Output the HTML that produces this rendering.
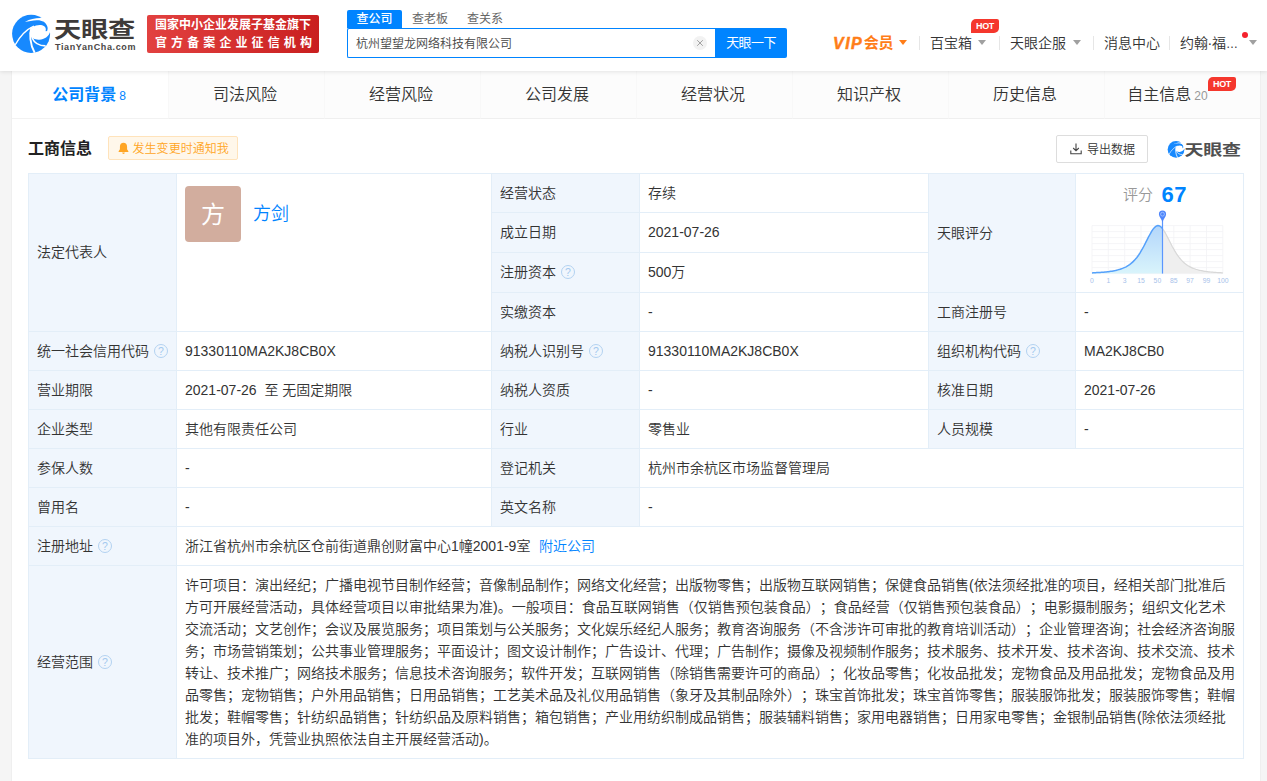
<!DOCTYPE html>
<html lang="zh-CN">
<head>
<meta charset="utf-8">
<title>杭州望望龙网络科技有限公司 - 天眼查</title>
<style>
*{box-sizing:border-box;margin:0;padding:0}
html,body{width:1267px;height:781px;overflow:hidden}
body{background:#f5f5f5;font-family:"Liberation Sans","Noto Sans CJK SC",sans-serif;font-size:14px;color:#333;position:relative}
a{text-decoration:none;color:#0084ff}
.abs{position:absolute}
/* header */
#hd{position:absolute;left:0;top:0;width:1267px;height:71px;background:#fff;box-shadow:0 1px 4px rgba(0,0,0,.10);z-index:5}
#logo-t{position:absolute;left:54px;top:11px;font-size:27.3px;font-weight:700;color:#3e3a39;line-height:38px;letter-spacing:-0.3px;white-space:nowrap;transform:scaleY(0.81);transform-origin:0 50%}
#logo-s{position:absolute;left:55px;top:42px;font-size:9px;font-weight:700;color:#4a4645;line-height:11px;letter-spacing:0.62px;white-space:nowrap}
#banner{position:absolute;left:147px;top:15px;width:172px;height:38px;border-radius:2px;background:linear-gradient(90deg,#e24140,#c91f1f);color:#fff;font-weight:700;white-space:nowrap;overflow:hidden}
#banner .l1{position:absolute;left:8px;top:2px;font-size:12px;line-height:17px;letter-spacing:0}
#banner .l2{position:absolute;left:8px;top:19.5px;font-size:12px;line-height:17px;letter-spacing:4.1px}
.stab{position:absolute;top:10px;height:18px;line-height:18px;font-size:12px;color:#666;white-space:nowrap}
#st1{left:347px;width:55px;background:#0084ff;color:#fff;text-align:center;border-radius:2px 2px 0 0;font-weight:500}
#sbox{position:absolute;left:347px;top:28px;width:369px;height:30px;border:1px solid #0084ff;border-right:0;border-radius:2px 0 0 2px;background:#fff}
#sbox span{position:absolute;left:8px;top:2px;line-height:27px;font-size:12px;color:#444;font-weight:350;white-space:nowrap}
#sclear{position:absolute;left:693px;top:36px}
#sbtn{position:absolute;left:715px;top:28px;width:72px;height:30px;background:#0084ff;color:#fff;font-size:13px;font-weight:400;line-height:29px;text-align:center;border-radius:0 2px 2px 0;letter-spacing:-0.6px}
.nav{position:absolute;top:33px;line-height:20px;font-size:14px;color:#333;white-space:nowrap;font-weight:350}
.sep{position:absolute;top:36px;width:1px;height:14px;background:#e6e6e6}
.arr{position:absolute;top:40px;width:0;height:0;border-left:4.5px solid transparent;border-right:4.5px solid transparent;border-top:5.5px solid #a0a0a0}
.hot{position:absolute;width:28px;height:14px;background:#f5372d;color:#fff;font-size:9px;font-weight:700;line-height:14px;text-align:center;border-radius:5px 2px 5px 0;letter-spacing:-0.3px}
/* main */
#main{position:absolute;left:12px;top:71px;width:1248px;height:710px;background:#fff;box-shadow:0 0 0 1px #efefef}
.tab{position:absolute;top:0;width:156px;height:48px;background:#fcfcfc;border-bottom:1px solid #efefef;border-left:1px solid #f8f8f8;text-align:center;line-height:47px;font-size:16px;color:#333;font-weight:350;padding-right:3px;white-space:nowrap}
.tab.on{background:#fff;border-bottom:1px solid #f2f2f2;padding-right:2px;color:#0084ff;font-weight:700;border-left:0}
.tab small{font-size:12px;font-weight:400;color:#999;margin-left:3px}
.tab.on small{color:#0084ff}
#ttl{position:absolute;left:16px;top:67px;font-size:16px;font-weight:700;color:#222;line-height:22px;white-space:nowrap}
#notice{position:absolute;left:96px;top:65px;width:130px;height:24px;border:1px solid #ffe3bb;background:#fff7ea;border-radius:2px;color:#ffa524;font-size:12px;line-height:22px;white-space:nowrap}
#notice span{position:absolute;left:23.5px;top:0.5px;letter-spacing:0.05px;font-weight:350}
#export{position:absolute;left:1044px;top:64px;width:92px;height:28px;border:1px solid #ddd;border-radius:2px;font-size:12px;color:#333;line-height:26px;white-space:nowrap;background:#fff}
#export span{position:absolute;left:30px;top:0.5px;letter-spacing:0;font-weight:350}
#wm-t{position:absolute;left:1172.5px;top:66.8px;font-size:19px;font-weight:700;color:#505050;line-height:24px;white-space:nowrap;letter-spacing:-0.3px;transform:scaleY(0.77);transform-origin:0 50%}
/* table */
#tb{position:absolute;left:16px;top:102px;width:1216px;height:586px;border:1px solid #e3eef8;background:#fff}
.c{position:absolute;border-right:1px solid #e3eef8;border-bottom:1px solid #e3eef8;font-size:14px;color:#333;white-space:nowrap;padding-left:8px;padding-bottom:1px;line-height:20px;display:flex;align-items:center;font-weight:350}
.c.k{background:#f0f6fd}
.q{display:inline-block;width:14px;height:14px;border:1px solid #b3d2f1;border-radius:50%;margin-left:5px;color:#a3c9ef;font-size:10.5px;line-height:13.5px;text-align:center;font-weight:400;font-family:"Liberation Sans",sans-serif}
#ava{position:absolute;left:8px;top:12px;width:56px;height:56px;border-radius:4px;background:#d2ad9e;color:#fff;font-size:24px;line-height:57px;text-align:center;font-weight:400}
#rep{position:absolute;left:76px;top:26px;font-size:18px;line-height:28px;font-weight:350;color:#0084ff}
#scope{position:absolute;left:156px;top:400px;text-spacing-trim:space-all;font-size:14px;line-height:22px;color:#333;font-weight:350;white-space:nowrap}
#scope div{height:22px}
</style>
</head>
<body>
<div id="hd">
  <svg class="abs" style="left:6px;top:8px" width="50" height="50" viewBox="0 0 781 781">
    <circle cx="392" cy="404" r="297" fill="#1789fe"/>
    <path d="M415 295C470 265 550 250 598 285C622 305 628 335 618 358Q632 370 646 350C662 305 640 255 592 216C555 194 520 188 480 190C420 194 350 203 296 218C380 170 470 154 560 158L720 140L720 378L688 374C670 440 600 492 520 496C480 498 450 490 428 478L400 470C372 420 380 340 415 295Z" fill="#fff"/>
    <path d="M428 286C330 330 220 440 150 566" fill="none" stroke="#fff" stroke-width="23" stroke-linecap="round"/>
    <path d="M398 300C362 400 372 560 448 700" fill="none" stroke="#fff" stroke-width="29"/>
    <path d="M408 468C440 540 520 590 618 592" fill="none" stroke="#fff" stroke-width="25"/>
  </svg>
  <div id="logo-t">天眼查</div>
  <div id="logo-s">TianYanCha.com</div>
  <div id="banner"><div class="l1">国家中小企业发展子基金旗下</div><div class="l2">官方备案企业征信机构</div></div>

  <div class="stab" id="st1">查公司</div>
  <div class="stab" style="left:412px">查老板</div>
  <div class="stab" style="left:467px">查关系</div>
  <div id="sbox"><span>杭州望望龙网络科技有限公司</span></div>
  <svg id="sclear" width="14" height="14" viewBox="0 0 14 14"><circle cx="7" cy="7" r="7" fill="#f2f2f2"/><path d="M4.2 4.2l5.600 5.600M9.800 4.2l-5.600 5.600" stroke="#999" stroke-width="0.9" fill="none"/></svg>
  <div id="sbtn">天眼一下</div>

  <div class="nav" style="left:833px;top:33px;color:#ff7d18;font-weight:700;font-size:15px;letter-spacing:-0.3px"><i style="font-size:16px;letter-spacing:1.5px;margin-right:0.5px;position:relative;top:1px;-webkit-text-stroke:0.5px #ff7d18">VIP</i>会员</div>
  <div class="arr" style="left:899px;border-top-color:#ff7d18"></div>
  <div class="sep" style="left:919px"></div>
  <div class="nav" style="left:930px">百宝箱</div>
  <div class="arr" style="left:978px"></div>
  <div class="hot" style="left:971px;top:19px">HOT</div>
  <div class="sep" style="left:999px"></div>
  <div class="nav" style="left:1010px">天眼企服</div>
  <div class="arr" style="left:1073px"></div>
  <div class="sep" style="left:1093px"></div>
  <div class="nav" style="left:1104px">消息中心</div>
  <div class="sep" style="left:1169px"></div>
  <div class="nav" style="left:1180px">约翰<span style="margin:0 -0.4px 0 -0.4px">·</span>福<span style="font-size:12px">…</span></div>
  <div class="abs" style="left:1242px;top:32px;width:6px;height:6px;border-radius:50%;background:#f5222d"></div>
  <div class="arr" style="left:1249px"></div>
</div>

<div id="main">
  <div class="tab on" style="left:0">公司背景<small>8</small></div>
  <div class="tab" style="left:156px">司法风险</div>
  <div class="tab" style="left:312px">经营风险</div>
  <div class="tab" style="left:468px">公司发展</div>
  <div class="tab" style="left:624px">经营状况</div>
  <div class="tab" style="left:780px">知识产权</div>
  <div class="tab" style="left:936px">历史信息</div>
  <div class="tab" style="left:1092px;padding-right:30px">自主信息<small>20</small></div>
  <div class="hot" style="left:1196px;top:6px">HOT</div>

  <div id="ttl">工商信息</div>
  <div id="notice">
    <svg class="abs" style="left:7.5px;top:5px" width="13" height="13" viewBox="0 0 12 12"><path d="M6 0.8c-2 0-3.3 1.5-3.3 3.5v2.4L1.5 8.6v0.6h9V8.6L9.3 6.7V4.3C9.3 2.3 8 0.8 6 0.8z M4.8 9.8a1.2 1.2 0 0 0 2.4 0z" fill="#ffa524"/></svg>
    <span>发生变更时通知我</span>
  </div>
  <div id="export">
    <svg class="abs" style="left:13px;top:7px" width="12" height="12" viewBox="0 0 12 12" fill="none" stroke="#444" stroke-width="1.1"><path d="M6 0.5v7M3.2 5 6 7.8 8.8 5M0.8 7.5v3.2h10.4V7.500"/></svg>
    <span>导出数据</span>
  </div>
  <svg class="abs" style="left:1153px;top:67px" width="22" height="22" viewBox="0 0 781 781">
    <circle cx="392" cy="404" r="297" fill="#1789fe"/>
    <path d="M415 295C470 265 550 250 598 285C622 305 628 335 618 358Q632 370 646 350C662 305 640 255 592 216C555 194 520 188 480 190C420 194 350 203 296 218C380 170 470 154 560 158L720 140L720 378L688 374C670 440 600 492 520 496C480 498 450 490 428 478L400 470C372 420 380 340 415 295Z" fill="#fff"/>
    <path d="M428 286C330 330 220 440 150 566" fill="none" stroke="#fff" stroke-width="23" stroke-linecap="round"/>
    <path d="M398 300C362 400 372 560 448 700" fill="none" stroke="#fff" stroke-width="29"/>
    <path d="M408 468C440 540 520 590 618 592" fill="none" stroke="#fff" stroke-width="25"/>
  </svg>
  <div id="wm-t">天眼查</div>

  <div id="tb">
    <div class="c k" style="left:0px;top:0px;width:148px;height:158px">法定代表人</div>
    <div class="c" style="left:148px;top:0px;width:315px;height:158px"><div id="ava">方</div><a id="rep">方剑</a></div>
    <div class="c k" style="left:463px;top:0px;width:148px;height:39px">经营状态</div>
    <div class="c" style="left:611px;top:0px;width:289px;height:39px">存续</div>
    <div class="c k" style="left:463px;top:39px;width:148px;height:40px">成立日期</div>
    <div class="c" style="left:611px;top:39px;width:289px;height:40px">2021-07-26</div>
    <div class="c k" style="left:463px;top:79px;width:148px;height:40px">注册资本<span class="q">?</span></div>
    <div class="c" style="left:611px;top:79px;width:289px;height:40px">500万</div>
    <div class="c k" style="left:463px;top:119px;width:148px;height:39px">实缴资本</div>
    <div class="c" style="left:611px;top:119px;width:289px;height:39px">-</div>
    <div class="c k" style="left:900px;top:0px;width:147px;height:119px">天眼评分</div>
    <div class="c" style="left:1047px;top:0px;width:168px;height:119px"><svg id="chart" width="167" height="118" viewBox="0 0 167 118" style="position:absolute;left:0;top:0"><defs><linearGradient id="gb" x1="0" y1="0" x2="0" y2="1"><stop offset="0" stop-color="#b3d6fb"/><stop offset="1" stop-color="#d9f4fb"/></linearGradient></defs><path d="M16.0 51.6V99.6M32.3 51.6V99.6M48.7 51.6V99.6M65.0 51.6V99.6M81.4 51.6V99.6M97.8 51.6V99.6M114.1 51.6V99.6M130.5 51.6V99.6M146.8 51.6V99.6M16.0 51.6H146.8M16.0 57.6H146.8M16.0 63.6H146.8M16.0 69.6H146.8M16.0 75.6H146.8M16.0 81.6H146.8M16.0 87.6H146.8M16.0 93.6H146.8M16.0 99.6H146.8" stroke="#f2f3f5" stroke-width="0.8" fill="none"/><path d="M86.5 54.6 L87.5 56.0 L88.5 57.6 L89.5 59.3 L90.5 61.2 L91.5 63.1 L92.5 65.1 L93.5 67.1 L94.5 69.1 L95.5 71.1 L96.5 73.0 L97.6 74.8 L98.6 76.6 L99.6 78.2 L100.6 79.8 L101.6 81.3 L102.6 82.7 L103.6 84.0 L104.6 85.2 L105.6 86.3 L106.6 87.3 L107.6 88.3 L108.6 89.2 L109.6 90.0 L110.6 90.7 L111.6 91.4 L112.6 92.0 L113.6 92.6 L114.6 93.1 L115.6 93.6 L116.7 94.1 L117.7 94.5 L118.7 94.8 L119.7 95.2 L120.7 95.5 L121.7 95.8 L122.7 96.1 L123.7 96.3 L124.7 96.5 L125.7 96.7 L126.7 96.9 L127.7 97.1 L128.7 97.3 L129.7 97.4 L130.7 97.6 L131.7 97.7 L132.7 97.8 L133.7 97.9 L134.7 98.0 L135.7 98.1 L136.8 98.2 L137.8 98.3 L138.8 98.4 L139.8 98.4 L140.8 98.5 L141.8 98.6 L142.8 98.6 L143.8 98.7 L144.8 98.7 L145.8 98.8 L146.8 98.8 L146.8 99.6 L86.5 99.6Z" fill="#efefef"/><path d="M86.5 54.6 L87.5 56.0 L88.5 57.6 L89.5 59.3 L90.5 61.2 L91.5 63.1 L92.5 65.1 L93.5 67.1 L94.5 69.1 L95.5 71.1 L96.5 73.0 L97.6 74.8 L98.6 76.6 L99.6 78.2 L100.6 79.8 L101.6 81.3 L102.6 82.7 L103.6 84.0 L104.6 85.2 L105.6 86.3 L106.6 87.3 L107.6 88.3 L108.6 89.2 L109.6 90.0 L110.6 90.7 L111.6 91.4 L112.6 92.0 L113.6 92.6 L114.6 93.1 L115.6 93.6 L116.7 94.1 L117.7 94.5 L118.7 94.8 L119.7 95.2 L120.7 95.5 L121.7 95.8 L122.7 96.1 L123.7 96.3 L124.7 96.5 L125.7 96.7 L126.7 96.9 L127.7 97.1 L128.7 97.3 L129.7 97.4 L130.7 97.6 L131.7 97.7 L132.7 97.8 L133.7 97.9 L134.7 98.0 L135.7 98.1 L136.8 98.2 L137.8 98.3 L138.8 98.4 L139.8 98.4 L140.8 98.5 L141.8 98.6 L142.8 98.6 L143.8 98.7 L144.8 98.7 L145.8 98.8 L146.8 98.8" fill="none" stroke="#d8d8d8" stroke-width="1.2"/><path d="M16.0 98.9 L17.2 98.8 L18.3 98.8 L19.5 98.7 L20.7 98.6 L21.9 98.6 L23.0 98.5 L24.2 98.4 L25.4 98.3 L26.6 98.3 L27.8 98.2 L28.9 98.0 L30.1 97.9 L31.3 97.8 L32.5 97.7 L33.6 97.5 L34.8 97.3 L36.0 97.2 L37.2 96.9 L38.3 96.7 L39.5 96.5 L40.7 96.2 L41.8 95.9 L43.0 95.6 L44.2 95.2 L45.4 94.8 L46.5 94.4 L47.7 93.9 L48.9 93.4 L50.1 92.8 L51.2 92.1 L52.4 91.4 L53.6 90.6 L54.8 89.7 L56.0 88.7 L57.1 87.6 L58.3 86.4 L59.5 85.1 L60.7 83.7 L61.8 82.2 L63.0 80.5 L64.2 78.7 L65.3 76.7 L66.5 74.7 L67.7 72.5 L68.9 70.2 L70.0 67.9 L71.2 65.6 L72.4 63.2 L73.6 61.0 L74.8 58.8 L75.9 56.9 L77.1 55.1 L78.3 53.7 L79.5 52.6 L80.6 51.9 L81.8 51.6 L83.0 51.7 L84.2 52.3 L85.3 53.3 L86.5 54.6 L86.5 99.6 L16.0 99.6Z" fill="url(#gb)"/><path d="M16.0 98.9 L17.2 98.8 L18.3 98.8 L19.5 98.7 L20.7 98.6 L21.9 98.6 L23.0 98.5 L24.2 98.4 L25.4 98.3 L26.6 98.3 L27.8 98.2 L28.9 98.0 L30.1 97.9 L31.3 97.8 L32.5 97.7 L33.6 97.5 L34.8 97.3 L36.0 97.2 L37.2 96.9 L38.3 96.7 L39.5 96.5 L40.7 96.2 L41.8 95.9 L43.0 95.6 L44.2 95.2 L45.4 94.8 L46.5 94.4 L47.7 93.9 L48.9 93.4 L50.1 92.8 L51.2 92.1 L52.4 91.4 L53.6 90.6 L54.8 89.7 L56.0 88.7 L57.1 87.6 L58.3 86.4 L59.5 85.1 L60.7 83.7 L61.8 82.2 L63.0 80.5 L64.2 78.7 L65.3 76.7 L66.5 74.7 L67.7 72.5 L68.9 70.2 L70.0 67.9 L71.2 65.6 L72.4 63.2 L73.6 61.0 L74.8 58.8 L75.9 56.9 L77.1 55.1 L78.3 53.7 L79.5 52.6 L80.6 51.9 L81.8 51.6 L83.0 51.7 L84.2 52.3 L85.3 53.3 L86.5 54.6" fill="none" stroke="#55a1fb" stroke-width="1.5"/><path d="M86.5 44.0V99.6" stroke="#5a96ff" stroke-width="1.2"/><path d="M82.9 40.2a3.6 3.6 0 1 1 7.2 0c0 2.2-2.4 4.6-3.6 7.8c-1.2-3.2-3.6-5.600-3.6-7.800z" fill="#4f86fb"/><circle cx="86.5" cy="40.2" r="1.9" fill="none" stroke="#a9c9ff" stroke-width="0.8"/><g font-family="Liberation Sans, sans-serif" font-size="6.8" fill="#a7c2ea"><text x="16.0" y="109" text-anchor="middle">0</text><text x="32.3" y="109" text-anchor="middle">1</text><text x="48.7" y="109" text-anchor="middle">3</text><text x="65.0" y="109" text-anchor="middle">15</text><text x="81.4" y="109" text-anchor="middle">50</text><text x="97.8" y="109" text-anchor="middle">85</text><text x="114.1" y="109" text-anchor="middle">97</text><text x="130.5" y="109" text-anchor="middle">99</text><text x="146.8" y="109" text-anchor="middle">100</text></g><text x="47" y="25.5" font-family="Liberation Sans, Noto Sans CJK SC, sans-serif" font-size="15" font-weight="350" fill="#999">评分</text><text x="85.5" y="27.80000000000001" font-family="Liberation Sans, sans-serif" font-size="22" font-weight="700" fill="#0084ff" letter-spacing="0.4">67</text></svg></div>
    <div class="c k" style="left:900px;top:119px;width:147px;height:39px">工商注册号</div>
    <div class="c" style="left:1047px;top:119px;width:168px;height:39px">-</div>
    <div class="c k" style="left:0px;top:158px;width:148px;height:39px">统一社会信用代码<span class="q">?</span></div>
    <div class="c" style="left:148px;top:158px;width:315px;height:39px">91330110MA2KJ8CB0X</div>
    <div class="c k" style="left:463px;top:158px;width:148px;height:39px">纳税人识别号<span class="q">?</span></div>
    <div class="c" style="left:611px;top:158px;width:289px;height:39px">91330110MA2KJ8CB0X</div>
    <div class="c k" style="left:900px;top:158px;width:147px;height:39px">组织机构代码<span class="q">?</span></div>
    <div class="c" style="left:1047px;top:158px;width:168px;height:39px">MA2KJ8CB0</div>
    <div class="c k" style="left:0px;top:197px;width:148px;height:39px">营业期限</div>
    <div class="c" style="left:148px;top:197px;width:315px;height:39px">2021-07-26&nbsp; 至 无固定期限</div>
    <div class="c k" style="left:463px;top:197px;width:148px;height:39px">纳税人资质</div>
    <div class="c" style="left:611px;top:197px;width:289px;height:39px">-</div>
    <div class="c k" style="left:900px;top:197px;width:147px;height:39px">核准日期</div>
    <div class="c" style="left:1047px;top:197px;width:168px;height:39px">2021-07-26</div>
    <div class="c k" style="left:0px;top:236px;width:148px;height:39px">企业类型</div>
    <div class="c" style="left:148px;top:236px;width:315px;height:39px">其他有限责任公司</div>
    <div class="c k" style="left:463px;top:236px;width:148px;height:39px">行业</div>
    <div class="c" style="left:611px;top:236px;width:289px;height:39px">零售业</div>
    <div class="c k" style="left:900px;top:236px;width:147px;height:39px">人员规模</div>
    <div class="c" style="left:1047px;top:236px;width:168px;height:39px">-</div>
    <div class="c k" style="left:0px;top:275px;width:148px;height:39px">参保人数</div>
    <div class="c" style="left:148px;top:275px;width:315px;height:39px">-</div>
    <div class="c k" style="left:463px;top:275px;width:148px;height:39px">登记机关</div>
    <div class="c" style="left:611px;top:275px;width:604px;height:39px">杭州市余杭区市场监督管理局</div>
    <div class="c k" style="left:0px;top:314px;width:148px;height:39px">曾用名</div>
    <div class="c" style="left:148px;top:314px;width:315px;height:39px">-</div>
    <div class="c k" style="left:463px;top:314px;width:148px;height:39px">英文名称</div>
    <div class="c" style="left:611px;top:314px;width:604px;height:39px">-</div>
    <div class="c k" style="left:0px;top:353px;width:148px;height:39px">注册地址<span class="q">?</span></div>
    <div class="c" style="left:148px;top:353px;width:1067px;height:39px">浙江省杭州市余杭区仓前街道鼎创财富中心1幢2001-9室<a style="margin-left:8.5px">附近公司</a></div>
    <div class="c k" style="left:0px;top:392px;width:148px;height:193px">经营范围<span class="q">?</span></div>
    <div class="c" style="left:148px;top:392px;width:1067px;height:193px"></div>
    <div id="scope">
      <div class="s1">许可项目：演出经纪；广播电视节目制作经营；音像制品制作；网络文化经营；出版物零售；出版物互联网销售；保健食品销售(依法须经批准的项目，经相关部门批准后</div>
      <div class="s2">方可开展经营活动，具体经营项目以审批结果为准)。一般项目：食品互联网销售（仅销售预包装食品）；食品经营（仅销售预包装食品）；电影摄制服务；组织文化艺术</div>
      <div class="s3">交流活动；文艺创作；会议及展览服务；项目策划与公关服务；文化娱乐经纪人服务；教育咨询服务（不含涉许可审批的教育培训活动）；企业管理咨询；社会经济咨询服</div>
      <div class="s4">务；市场营销策划；公共事业管理服务；平面设计；图文设计制作；广告设计、代理；广告制作；摄像及视频制作服务；技术服务、技术开发、技术咨询、技术交流、技术</div>
      <div class="s5">转让、技术推广；网络技术服务；信息技术咨询服务；软件开发；互联网销售（除销售需要许可的商品）；化妆品零售；化妆品批发；宠物食品及用品批发；宠物食品及用</div>
      <div class="s6">品零售；宠物销售；户外用品销售；日用品销售；工艺美术品及礼仪用品销售（象牙及其制品除外）；珠宝首饰批发；珠宝首饰零售；服装服饰批发；服装服饰零售；鞋帽</div>
      <div class="s7">批发；鞋帽零售；针纺织品销售；针纺织品及原料销售；箱包销售；产业用纺织制成品销售；服装辅料销售；家用电器销售；日用家电零售；金银制品销售(除依法须经批</div>
      <div class="s8">准的项目外，凭营业执照依法自主开展经营活动)。</div>
    </div>
  </div>
</div>
</body>
</html>
